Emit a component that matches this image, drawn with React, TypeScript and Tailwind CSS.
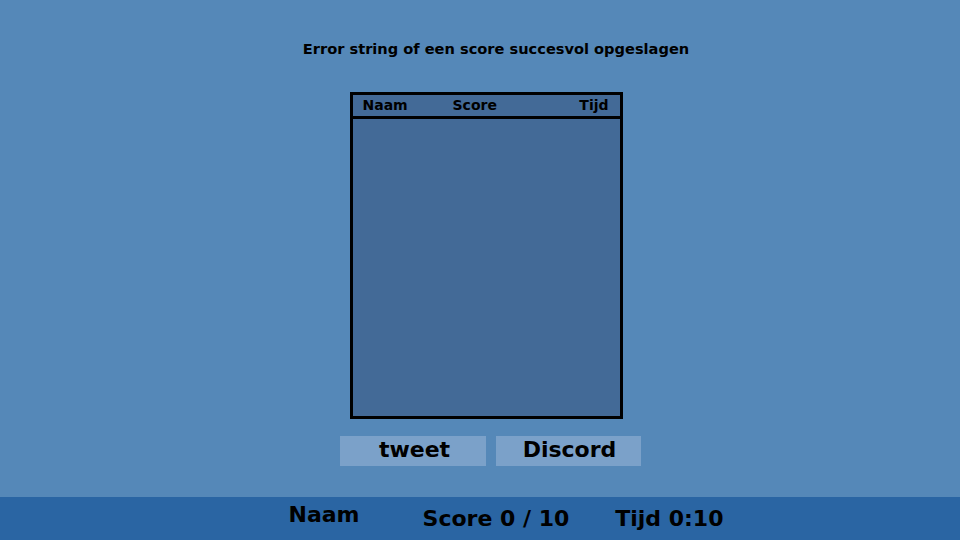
export default function App() {
  return (
    <div className="h-[540px] w-[960px] bg-[#5588b8] flex flex-col font-['DejaVu_Sans',Arial,sans-serif] text-black overflow-hidden">
      <main className="flex-1 flex flex-col items-center">
        <p className="mt-[39px] ml-[32px] text-[14.6px] font-bold leading-[20px]">
          Error string of een score succesvol opgeslagen
        </p>

        {/* scorebord */}
        <div className="mt-[33px] ml-[12px] w-[273px] h-[327px] border-[3px] border-black bg-[#436a97] flex flex-col">
          <div className="h-[24px] border-b-[3px] border-black flex items-center text-[14px] font-bold px-[10px]">
            <span className="w-[90px]">Naam</span>
            <span className="flex-1">Score</span>
            <span className="pr-[1px]">Tijd</span>
          </div>
          <div className="flex-1" />
        </div>

        <div className="mt-[17px] flex gap-[10px] ml-[20px]">
          <button className="w-[146px] h-[30px] bg-[#7ba1c9] text-[22px] font-bold leading-none pl-[4px] pb-[3px]">
            tweet
          </button>
          <button className="w-[145px] h-[30px] bg-[#7ba1c9] text-[22px] font-bold leading-none pl-[3px] pb-[3px]">
            Discord
          </button>
        </div>
      </main>

      <footer className="h-[43px] bg-[#2a65a3] flex items-center justify-center text-[22px] font-bold leading-none pl-[52px]">
        <span className="mb-[8px]">Naam</span>
        <span className="ml-[63px] mt-[1px]">Score 0 / 10</span>
        <span className="ml-[46px] mt-[1px]">Tijd 0:10</span>
      </footer>
    </div>
  );
}
